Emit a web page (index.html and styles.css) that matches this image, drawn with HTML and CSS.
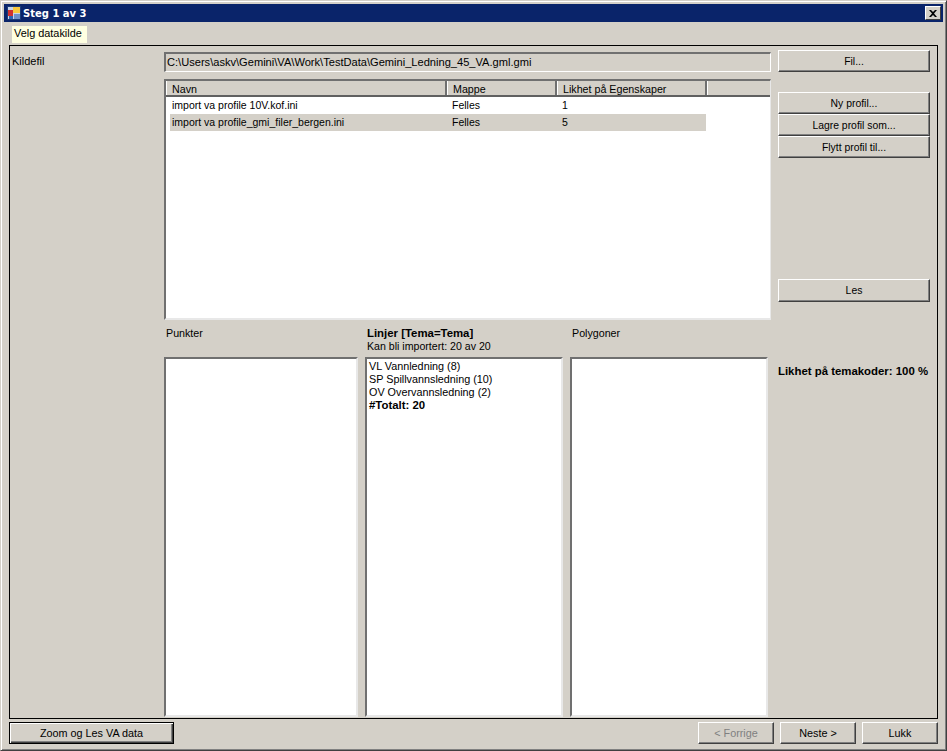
FILE: index.html
```html
<!DOCTYPE html>
<html>
<head>
<meta charset="utf-8">
<title>Steg 1 av 3</title>
<link rel="stylesheet" href="styles.css">
</head>
<body>
<div class="window">
  <div class="titlebar">
    <svg class="appicon" width="14" height="14" viewBox="0 0 14 14">
      <rect x="0.500" y="0.500" width="13" height="13" fill="#c8d4e8" stroke="#1c3c78"/>
      <rect x="1" y="4" width="5" height="6" fill="#d03030"/>
      <rect x="6" y="1" width="7" height="6" fill="#f8c840"/>
      <rect x="2" y="10" width="4" height="3" fill="#3060b0"/>
      <rect x="7" y="8" width="6" height="5" fill="#7090c8"/>
    </svg>
    <span class="title">Steg 1 av 3</span>
    <span class="close">
      <svg width="8" height="7" viewBox="0 0 8 7"><path d="M0 0h2l2 2 2-2h2L5 3.500 8 7H6L4 5 2 7H0l3-3.500z" fill="#000"/></svg>
    </span>
  </div>
  <div class="tabs"><span class="tab">Velg datakilde</span></div>
  <div class="panel">
    <div class="top">
      <div class="labelcol">Kildefil</div>
      <div class="maincol">
        <div class="pathfield">C:\Users\askv\Gemini\VA\Work\TestData\Gemini_Ledning_45_VA.gml.gmi</div>
        <div class="grid">
          <div class="gridhead">
            <span class="col col1">Navn</span>
            <span class="col col2">Mappe</span>
            <span class="col col3">Likhet på Egenskaper</span>
            <span class="col colrest"></span>
          </div>
          <div class="row">
            <span class="cell col1">import va profile 10V.kof.ini</span>
            <span class="cell col2">Felles</span>
            <span class="cell col3">1</span>
          </div>
          <div class="row selected">
            <span class="cell col1">import va profile_gmi_filer_bergen.ini</span>
            <span class="cell col2">Felles</span>
            <span class="cell col3">5</span>
          </div>
        </div>
      </div>
      <div class="sidecol">
        <button class="btn btn-fil">Fil...</button>
        <button class="btn btn-ny">Ny profil...</button>
        <button class="btn btn-small">Lagre profil som...</button>
        <button class="btn btn-small">Flytt profil til...</button>
        <button class="btn btn-les">Les</button>
      </div>
    </div>
    <div class="bottom">
      <div class="listcol punkter">
        <div class="listhead">Punkter</div>
        <div class="listbox"></div>
      </div>
      <div class="listcol linjer">
        <div class="listhead"><b>Linjer [Tema=Tema]</b><br><span class="count">Kan bli importert: 20 av 20</span></div>
        <div class="listbox">
          <div>VL Vannledning (8)</div>
          <div>SP Spillvannsledning (10)</div>
          <div>OV Overvannsledning (2)</div>
          <div><b>#Totalt: 20</b></div>
        </div>
      </div>
      <div class="listcol polygoner">
        <div class="listhead">Polygoner</div>
        <div class="listbox"></div>
      </div>
      <div class="likhet"><b>Likhet på temakoder: 100 %</b></div>
    </div>
  </div>
  <div class="footer">
    <button class="btn btn-default">Zoom og Les VA data</button>
    <div class="spacer"></div>
    <button class="btn btn-nav" disabled>&lt; Forrige</button>
    <button class="btn btn-nav">Neste &gt;</button>
    <button class="btn btn-nav">Lukk</button>
  </div>
</div>
</body>
</html>
```

FILE: styles.css
```css
* {
	box-sizing: border-box;
}

html, body {
	margin: 0;
	padding: 0;
	overflow: hidden;
}

body {
	font-family: "Liberation Sans", Arial, sans-serif;
	font-size: 11px;
	color: #000;
	background: #d4d0c8;
}

b {
	font-weight: bold;
	font-size: 11.4px;
}

.window {
	width: 947px;
	height: 751px;
	display: flex;
	flex-direction: column;
	background: #d4d0c8;
	padding: 4px;
	border-top: 1px solid #d4d0c8;
	border-left: 1px solid #d4d0c8;
	border-right: 1px solid #404040;
	border-bottom: 1px solid #404040;
	box-shadow: inset 1px 1px 0 #fff, inset -1px -1px 0 #808080;
}

.titlebar {
	margin: -1px -1px 0 -1px;
	height: 18px;
	flex: none;
	display: flex;
	align-items: center;
	background: #0a246a;
	color: #fff;
	padding: 0 2px 0 3px;
}

.appicon {
	flex: none;
	margin-right: 2px;
}

.title {
	flex: 1;
	font-weight: bold;
	font-size: 10px;
	font-family: "DejaVu Sans", sans-serif;
}

.close {
	width: 16px;
	height: 14px;
	display: flex;
	align-items: center;
	justify-content: center;
	background: #d4d0c8;
	border-top: 1px solid #fff;
	border-left: 1px solid #fff;
	border-right: 1px solid #404040;
	border-bottom: 1px solid #404040;
}

.tabs {
	flex: none;
	height: 23px;
	padding: 4px 0 0 7px;
}

.tab {
	display: block;
	width: 75px;
	height: 17px;
	line-height: 15px;
	padding-left: 2px;
	font-size: 10.9px;
	background: #ffffe1;
}

.panel {
	flex: none;
	width: 929px;
	height: 674px;
	margin-left: 4px;
	border: 1px solid #000;
	padding: 6px 0 1px 2px;
	display: flex;
	flex-direction: column;
}

.top {
	display: flex;
	flex: none;
	height: 269px;
}

.labelcol {
	width: 152px;
	flex: none;
	padding-top: 3px;
}

.maincol {
	width: 607px;
	flex: none;
	display: flex;
	flex-direction: column;
}

.pathfield {
	height: 20px;
	line-height: 17px;
	padding-left: 1px;
	font-size: 11.1px;
	white-space: nowrap;
	border-top: 2px solid #707070;
	border-left: 2px solid #707070;
	border-right: 1px solid #fff;
	border-bottom: 1px solid #fff;
}

.grid {
	margin-top: 7px;
	height: 241px;
	background: #fff;
	border-top: 2px solid #707070;
	border-left: 2px solid #707070;
	border-right: 1px solid #e8e8e8;
	border-bottom: 2px solid #e8e8e8;
}

.gridhead {
	display: flex;
	height: 16px;
	font-size: 10.7px;
	background: #d4d0c8;
	border-bottom: 2px solid #606060;
}

.col {
	height: 14px;
	line-height: 16px;
	padding-left: 5px;
	border-left: 1px solid #fff;
	border-right: 2px solid #707070;
	flex: none;
}

.gridhead .colrest {
	flex: 1;
	border-right: none;
}

.col1 {
	width: 281px;
}

.col2 {
	width: 110px;
}

.col3 {
	width: 150px;
}

.row {
	display: flex;
	height: 17px;
	line-height: 17px;
	margin-left: 4px;
	width: 536px;
	font-size: 10.5px;
}

.cell {
	padding-left: 2px;
	white-space: nowrap;
	flex: none;
}

.row .col1 {
	width: 280px;
}

.row .col3 {
	width: 146px;
}

.selected {
	background: #d4d0c8;
}

.sidecol {
	flex: none;
	width: 152px;
	margin: -2px 0 0 7px;
	display: flex;
	flex-direction: column;
}

.btn {
	font: inherit;
	font-size: 10.8px;
	color: #000;
	display: block;
	background: #d4d0c8;
	padding: 0;
	border-top: 1px solid #fff;
	border-left: 1px solid #fff;
	border-right: 1px solid #404040;
	border-bottom: 1px solid #404040;
	box-shadow: inset -1px -1px 0 #808080;
}

.sidecol .btn {
	width: 152px;
	height: 22px;
	flex: none;
	font-size: 10.4px;
}

.sidecol .btn-ny {
	margin-top: 20px;
}

.sidecol .btn-les {
	margin-top: 121px;
	height: 23px;
}

.bottom {
	flex: 1;
	display: flex;
	min-height: 0;
	margin-left: 152px;
	margin-top: 4px;
}

.listcol {
	flex: none;
	display: flex;
	flex-direction: column;
}

.punkter {
	width: 194px;
}

.linjer {
	width: 198px;
	margin-left: 7px;
}

.polygoner {
	width: 198px;
	margin-left: 7px;
}

.listhead {
	height: 32px;
	line-height: 13px;
	padding: 2px 0 0 2px;
	font-size: 10.7px;
	flex: none;
}

.count {
	font-size: 10.6px;
}

.listbox {
	flex: 1;
	background: #fff;
	line-height: 13px;
	padding: 1px 0 0 2px;
	font-size: 10.8px;
	border-top: 2px solid #707070;
	border-left: 2px solid #707070;
	border-right: 2px solid #e8e8e8;
	border-bottom: 2px solid #e8e8e8;
	white-space: nowrap;
}

.likhet {
	margin: 40px 0 0 10px;
	white-space: nowrap;
	line-height: 13px;
}

.footer {
	flex: none;
	display: flex;
	margin: 3px 0 0 4px;
	width: 929px;
	height: 22px;
	gap: 6px;
}

.spacer {
	flex: 1;
}

.btn-default {
	width: 165px;
	height: 22px;
	border: 1px solid #000;
	box-shadow: inset 1px 1px 0 #fff, inset -1px -1px 0 #404040, inset -2px -2px 0 #808080;
}

.btn-nav {
	width: 76px;
	height: 22px;
}

.btn:disabled {
	color: #808080;
}
```
